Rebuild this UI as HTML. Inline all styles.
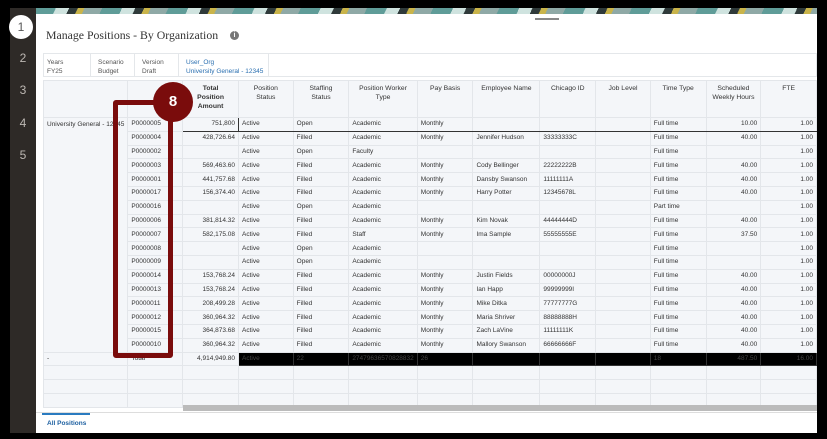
<!DOCTYPE html><html><head><meta charset="utf-8"><style>
*{margin:0;padding:0;box-sizing:border-box}
body{width:827px;height:439px;background:#000;position:relative;overflow:hidden;font-family:"Liberation Sans",Arial,sans-serif}
#side{position:absolute;left:10px;top:8px;width:26px;height:425px;background:#2e2a27}
.n{position:absolute;left:0;width:26px;text-align:center;color:#bdb8b3;font-size:12px}
#c1{position:absolute;left:-1px;top:7px;width:24px;height:24px;border-radius:50%;background:#fff;color:#555;font-size:12px;text-align:center;line-height:24px}
#main{position:absolute;left:36px;top:8px;width:781px;height:425px;background:#fff;overflow:hidden}
#ban{position:absolute;left:0;top:0;width:781px;height:6px;background:repeating-linear-gradient(115deg,#5f9c98 0 18px,#cfe3df 18px 30px,#2f3a3a 30px 38px,#c9b44a 38px 44px,#8fa9a6 44px 60px)}
#grip{position:absolute;left:499px;top:10px;width:24px;height:2px;background:#888}
h1{position:absolute;left:10px;top:20px;font-family:"Liberation Serif",serif;font-weight:normal;font-size:11.8px;color:#333}
#info{position:absolute;left:194px;top:23px;width:9px;height:9px;border-radius:50%;background:#777;color:#fff;font-size:7px;text-align:center;line-height:9px;font-weight:bold}
#pov{position:absolute;left:7px;top:45px;width:774px;height:24px;border:1px solid #e4e7ea;font-size:6.5px;color:#555}
#pov div{position:absolute;top:4px;line-height:9px;height:14px}
#pov .s{border-right:1px solid #e4e7ea;top:0;height:22px;padding-top:4px}
table{position:absolute;left:7px;top:72px;border-collapse:collapse;table-layout:fixed;font-size:6.5px;color:#333}
td{border:1px solid #e3e6ea;background:#f4f6f9;height:13.8px;padding:0 3px;white-space:nowrap;overflow:hidden;line-height:12px}
th{border:1px solid #e3e6ea;background:#f4f6f9;height:37px;font-weight:normal;vertical-align:top;padding-top:3px;font-size:6.8px;color:#333;line-height:9px}
.r{text-align:right}
.k{border-top:1px solid #333!important;border-bottom:1px solid #333!important}
tr.tot td{background:#000;color:#444;border-color:#333}
tr.tot td.w{background:#f4f6f9;color:#333;border-color:#e3e6ea}
#scroll{position:absolute;left:147px;top:397px;width:634px;height:6px;background:#bbb}
#tabs{position:absolute;left:0;top:404px;width:781px;height:21px;border-top:1px solid #ddd;background:#fff}
#tab{position:absolute;left:6px;top:0;width:48px;height:2px;background:#2a7bc0}
#tabs span{position:absolute;left:11px;top:7px;font-size:6.5px;color:#1c5fa0;font-weight:bold}
#box{position:absolute;left:113px;top:100px;width:60px;height:258px;border:5px solid #7a0c0c;border-radius:3px}
#num{position:absolute;left:153px;top:82px;width:40px;height:40px;border-radius:50%;background:#7a0c0c;color:#fff;font-weight:bold;font-size:15px;text-align:center;line-height:40px}
.e{border:none;border-left:1px solid #e3e6ea}
</style></head><body>
<div id="side"><div id="c1">1</div><div class="n" style="top:43px">2</div><div class="n" style="top:75px">3</div><div class="n" style="top:108px">4</div><div class="n" style="top:140px">5</div></div>
<div id="main">
<div id="ban"></div><div id="grip"></div>
<h1>Manage Positions - By Organization</h1><div id="info">i</div>
<div id="pov"><div class="s" style="left:3px;width:44px">Years<br>FY25</div><div class="s" style="left:47px;width:44px;padding-left:7px">Scenario<br>Budget</div><div class="s" style="left:91px;width:44px;padding-left:7px">Version<br>Draft</div><div class="s" style="left:135px;width:90px;padding-left:7px;color:#2a6fb0">User_Org<br>University General - 12345</div></div>
<table>
<colgroup><col style="width:84px"><col style="width:55px"><col style="width:56px"><col style="width:55px"><col style="width:56px"><col style="width:68px"><col style="width:56px"><col style="width:67px"><col style="width:56px"><col style="width:55px"><col style="width:56px"><col style="width:55px"><col style="width:56px"></colgroup>
<tr><th></th><th></th><th style="font-weight:bold">Total<br>Position<br>Amount</th><th>Position<br>Status</th><th>Staffing<br>Status</th><th>Position Worker<br>Type</th><th>Pay Basis</th><th>Employee Name</th><th>Chicago ID</th><th>Job Level</th><th>Time Type</th><th>Scheduled<br>Weekly Hours</th><th>FTE</th></tr>
<tr><td style="border-bottom:none">University General - 12345</td><td>P0000005</td><td class="r" style="border:1px solid #333">751,800</td><td class="k">Active</td><td class="k">Open</td><td class="k">Academic</td><td class="k">Monthly</td><td class="k"></td><td class="k"></td><td class="k"></td><td class="k">Full time</td><td class="r k">10.00</td><td class="r k">1.00</td></tr>
<tr><td class="e"></td><td>P0000004</td><td class="r">428,726.64</td><td>Active</td><td>Filled</td><td>Academic</td><td>Monthly</td><td>Jennifer Hudson</td><td>33333333C</td><td></td><td>Full time</td><td class="r">40.00</td><td class="r">1.00</td></tr>
<tr><td class="e"></td><td>P0000002</td><td></td><td>Active</td><td>Open</td><td>Faculty</td><td></td><td></td><td></td><td></td><td>Full time</td><td></td><td class="r">1.00</td></tr>
<tr><td class="e"></td><td>P0000003</td><td class="r">569,463.60</td><td>Active</td><td>Filled</td><td>Academic</td><td>Monthly</td><td>Cody Bellinger</td><td>22222222B</td><td></td><td>Full time</td><td class="r">40.00</td><td class="r">1.00</td></tr>
<tr><td class="e"></td><td>P0000001</td><td class="r">441,757.68</td><td>Active</td><td>Filled</td><td>Academic</td><td>Monthly</td><td>Dansby Swanson</td><td>11111111A</td><td></td><td>Full time</td><td class="r">40.00</td><td class="r">1.00</td></tr>
<tr><td class="e"></td><td>P0000017</td><td class="r">156,374.40</td><td>Active</td><td>Filled</td><td>Academic</td><td>Monthly</td><td>Harry Potter</td><td>12345678L</td><td></td><td>Full time</td><td class="r">40.00</td><td class="r">1.00</td></tr>
<tr><td class="e"></td><td>P0000016</td><td></td><td>Active</td><td>Open</td><td>Academic</td><td></td><td></td><td></td><td></td><td>Part time</td><td></td><td class="r">1.00</td></tr>
<tr><td class="e"></td><td>P0000006</td><td class="r">381,814.32</td><td>Active</td><td>Filled</td><td>Academic</td><td>Monthly</td><td>Kim Novak</td><td>44444444D</td><td></td><td>Full time</td><td class="r">40.00</td><td class="r">1.00</td></tr>
<tr><td class="e"></td><td>P0000007</td><td class="r">582,175.08</td><td>Active</td><td>Filled</td><td>Staff</td><td>Monthly</td><td>Ima Sample</td><td>55555555E</td><td></td><td>Full time</td><td class="r">37.50</td><td class="r">1.00</td></tr>
<tr><td class="e"></td><td>P0000008</td><td></td><td>Active</td><td>Open</td><td>Academic</td><td></td><td></td><td></td><td></td><td>Full time</td><td></td><td class="r">1.00</td></tr>
<tr><td class="e"></td><td>P0000009</td><td></td><td>Active</td><td>Open</td><td>Academic</td><td></td><td></td><td></td><td></td><td>Full time</td><td></td><td class="r">1.00</td></tr>
<tr><td class="e"></td><td>P0000014</td><td class="r">153,768.24</td><td>Active</td><td>Filled</td><td>Academic</td><td>Monthly</td><td>Justin Fields</td><td>00000000J</td><td></td><td>Full time</td><td class="r">40.00</td><td class="r">1.00</td></tr>
<tr><td class="e"></td><td>P0000013</td><td class="r">153,768.24</td><td>Active</td><td>Filled</td><td>Academic</td><td>Monthly</td><td>Ian Happ</td><td>99999999I</td><td></td><td>Full time</td><td class="r">40.00</td><td class="r">1.00</td></tr>
<tr><td class="e"></td><td>P0000011</td><td class="r">208,499.28</td><td>Active</td><td>Filled</td><td>Academic</td><td>Monthly</td><td>Mike Ditka</td><td>77777777G</td><td></td><td>Full time</td><td class="r">40.00</td><td class="r">1.00</td></tr>
<tr><td class="e"></td><td>P0000012</td><td class="r">360,964.32</td><td>Active</td><td>Filled</td><td>Academic</td><td>Monthly</td><td>Maria Shriver</td><td>88888888H</td><td></td><td>Full time</td><td class="r">40.00</td><td class="r">1.00</td></tr>
<tr><td class="e"></td><td>P0000015</td><td class="r">364,873.68</td><td>Active</td><td>Filled</td><td>Academic</td><td>Monthly</td><td>Zach LaVine</td><td>11111111K</td><td></td><td>Full time</td><td class="r">40.00</td><td class="r">1.00</td></tr>
<tr><td style="border-top:none"></td><td>P0000010</td><td class="r">360,964.32</td><td>Active</td><td>Filled</td><td>Academic</td><td>Monthly</td><td>Mallory Swanson</td><td>66666666F</td><td></td><td>Full time</td><td class="r">40.00</td><td class="r">1.00</td></tr>
<tr class="tot"><td class="w">-</td><td class="w">Total</td><td class="w r">4,914,949.80</td><td>Active</td><td>22</td><td>27479636570828832</td><td>26</td><td></td><td></td><td></td><td>18</td><td class="r">487.50</td><td class="r">16.00</td></tr>
<tr><td></td><td></td><td></td><td></td><td></td><td></td><td></td><td></td><td></td><td></td><td></td><td></td><td></td></tr>
<tr><td></td><td></td><td></td><td></td><td></td><td></td><td></td><td></td><td></td><td></td><td></td><td></td><td></td></tr>
<tr><td></td><td></td><td></td><td></td><td></td><td></td><td></td><td></td><td></td><td></td><td></td><td></td><td></td></tr>
</table>
<div id="scroll"></div>
<div id="tabs"><div id="tab"></div><span>All Positions</span></div>
</div>
<div id="box"></div><div id="num">8</div>
</body></html>
